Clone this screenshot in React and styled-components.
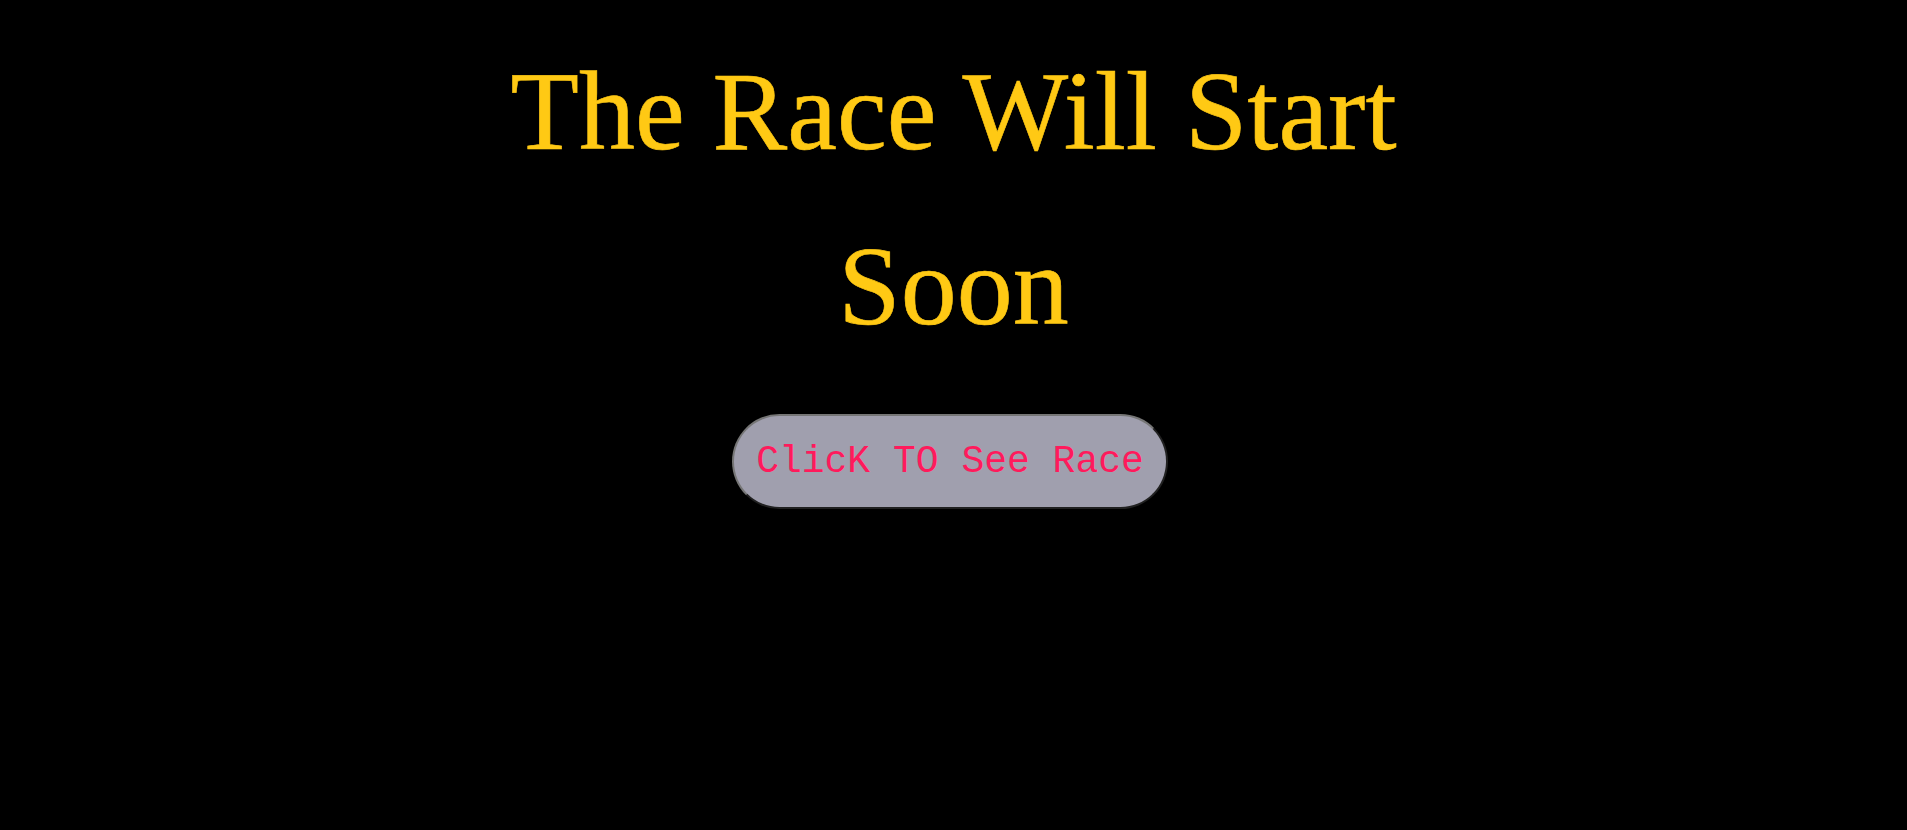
import React from "react";
import styled, { createGlobalStyle } from "styled-components";

const GlobalStyle = createGlobalStyle`
    html, body {
        margin: 0;
        padding: 0;
        background-color: #000;
        height: 100%;
    }
    #root {
        min-height: 100vh;
        background-color: #000;
    }
`;

const Wrapper = styled.div`
    display: flex;
    flex-direction: column;
    align-items: center;
    padding-top: 24px;
`;

const Title = styled.h1`
    margin: 0;
    max-width: 1000px;
    font-family: "Liberation Serif", "Times New Roman", serif;
    font-weight: normal;
    font-size: 112px;
    line-height: 175px;
    color: #ffc914;
    text-align: center;
    -webkit-text-stroke: 0.6px #ffc914;
`;

const RaceButton = styled.button`
    margin-top: 40px;
    margin-right: 7px;
    padding: 24px 22px;
    border: 2px outset #767676;
    border-radius: 50px;
    background-color: #a09fae;
    color: #ff1a5c;
    font-family: "Liberation Mono", "Courier New", monospace;
    font-size: 38px;
    cursor: pointer;
`;

const Waiting = () => {
    return (
        <>
            <GlobalStyle />
            <Wrapper>
                <Title>The Race Will Start Soon</Title>
                <RaceButton>ClicK TO See Race</RaceButton>
            </Wrapper>
        </>
    );
};

export default Waiting;
